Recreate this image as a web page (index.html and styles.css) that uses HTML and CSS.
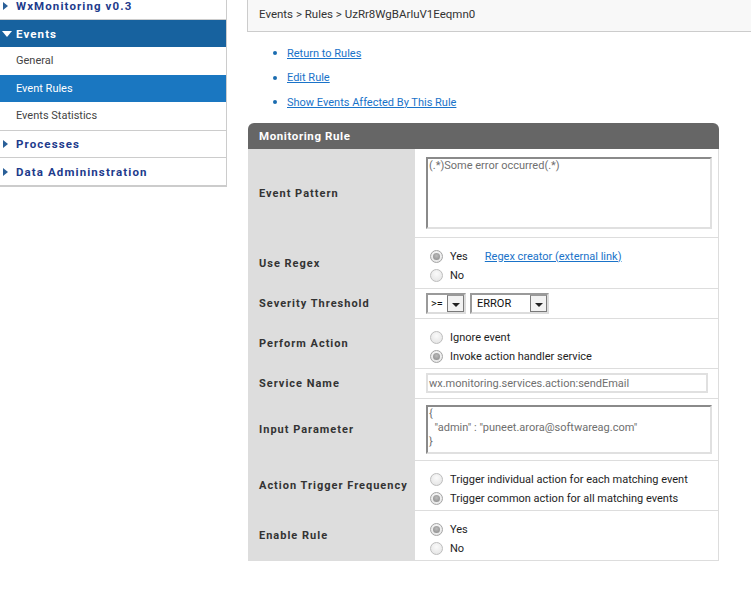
FILE: index.html
```html
<!DOCTYPE html>
<html>
<head>
<meta charset="utf-8">
<link rel="stylesheet" href="styles.css">
</head>
<body>
<div class="page">
  <nav class="sidebar">
    <div class="nav-head first"><span class="tri-right"></span>WxMonitoring v0.3</div>
    <div class="nav-head open"><span class="tri-down"></span>Events</div>
    <div class="nav-sub">
      <div class="nav-item">General</div>
      <div class="nav-item active">Event Rules</div>
      <div class="nav-item">Events Statistics</div>
    </div>
    <div class="nav-head"><span class="tri-right"></span>Processes</div>
    <div class="nav-head"><span class="tri-right"></span>Data Admininstration</div>
  </nav>
  <main class="main">
    <div class="crumbs">Events &gt; Rules &gt; UzRr8WgBArluV1Eeqmn0</div>
    <ul class="links">
      <li><a href="#">Return to Rules</a></li>
      <li><a href="#">Edit Rule</a></li>
      <li><a href="#">Show Events Affected By This Rule</a></li>
    </ul>
    <div class="panel">
      <div class="panel-head">Monitoring Rule</div>
      <div class="rows">
        <div class="row r-pattern">
          <div class="lbl">Event Pattern</div>
          <div class="val"><div class="ta ta-big">(.*)Some error occurred(.*)<span class="grip"></span></div></div>
        </div>
        <div class="row r-radio r-regex">
          <div class="lbl">Use Regex</div>
          <div class="val">
            <div class="opt"><span class="radio on"></span><span>Yes</span><a href="#" class="ext">Regex creator (external link)</a></div>
            <div class="opt"><span class="radio"></span><span>No</span></div>
          </div>
        </div>
        <div class="row r-thin">
          <div class="lbl">Severity Threshold</div>
          <div class="val sel-wrap">
            <span class="sel sel-op">&gt;=<span class="sel-btn"><span class="dn"></span></span></span>
            <span class="sel sel-lvl">ERROR<span class="sel-btn"><span class="dn"></span></span></span>
          </div>
        </div>
        <div class="row r-radio">
          <div class="lbl">Perform Action</div>
          <div class="val">
            <div class="opt"><span class="radio"></span><span>Ignore event</span></div>
            <div class="opt"><span class="radio on"></span><span>Invoke action handler service</span></div>
          </div>
        </div>
        <div class="row r-thin">
          <div class="lbl">Service Name</div>
          <div class="val"><div class="inp">wx.monitoring.services.action:sendEmail</div></div>
        </div>
        <div class="row r-input">
          <div class="lbl">Input Parameter</div>
          <div class="val"><div class="ta ta-small">{<br>&nbsp;&nbsp;"admin" : "puneet.arora@softwareag.com"<br>}<span class="grip"></span></div></div>
        </div>
        <div class="row r-radio">
          <div class="lbl">Action Trigger Frequency</div>
          <div class="val">
            <div class="opt"><span class="radio"></span><span>Trigger individual action for each matching event</span></div>
            <div class="opt"><span class="radio on"></span><span>Trigger common action for all matching events</span></div>
          </div>
        </div>
        <div class="row r-radio">
          <div class="lbl">Enable Rule</div>
          <div class="val">
            <div class="opt"><span class="radio on"></span><span>Yes</span></div>
            <div class="opt"><span class="radio"></span><span>No</span></div>
          </div>
        </div>
      </div>
    </div>
  </main>
</div>
</body>
</html>
```
FILE: styles.css
```css
* { box-sizing: border-box; }
html, body { margin: 0; padding: 0; background: #fff; }
body { font-family: Roboto, "Liberation Sans", sans-serif; font-size: 11px; color: #333; }
.page { display: flex; align-items: flex-start; }

.sidebar { width: 227px; flex: none; border-right: 1px solid #ccc; border-bottom: 1px solid #ccc; margin-top: -8px; }
.nav-head { height: 27.5px; display: flex; align-items: center; padding-left: 16px; position: relative;
  font-weight: 700; font-size: 11.5px; letter-spacing: 1.1px; color: #1d3b8c; border-bottom: 1px solid #ccc; }
.nav-head.first { height: 28px; }
.nav-head.open { background: #17629f; color: #fff; border-bottom: none; height: 27px; }
.tri-right { position: absolute; left: 3px; top: 50%; margin-top: -4px; width: 0; height: 0;
  border-top: 4px solid transparent; border-bottom: 4px solid transparent; border-left: 5px solid #2a5f98; }
.tri-down { position: absolute; left: 2px; top: 50%; margin-top: -3px; width: 0; height: 0;
  border-left: 5px solid transparent; border-right: 5px solid transparent; border-top: 6px solid #fff; }
.nav-sub { border-bottom: 1px solid #ccc; }
.nav-item { height: 27.6px; display: flex; align-items: center; padding-left: 16px; font-size: 11px; color: #444; }
.nav-item.active { background: #1a77c1; color: #fff; }

.main { margin-left: 20px; flex: 1; min-width: 0; }
.crumbs { height: 37px; margin-top: -5px; padding: 2px 0 0 11px; display: flex; align-items: center;
  background: #f8f8f8; border: 1px solid #ccc; border-top: none; border-right: none; margin-right: -10px;
  font-size: 11.5px; color: #333; }
.links { list-style: none; margin: 9px 0 0; padding: 0 0 0 26px; }
.links li { position: relative; height: 24.5px; display: flex; align-items: center; padding-left: 14px; }
.links li::before { content: ""; position: absolute; left: 0; top: 50%; margin-top: -2px; width: 4px; height: 4px; border-radius: 50%; background: #1a6cb0; }
.links a { color: #1a73c9; font-size: 11px; text-decoration: underline; }

.panel { width: 471px; margin-top: 8px; margin-left: 1px; }
.panel-head { height: 26px; background: #666; color: #fff; border-radius: 6px 6px 0 0; padding-left: 11px;
  display: flex; align-items: center; font-weight: 700; font-size: 11.5px; letter-spacing: 0.6px; }
.rows { border-right: 1px solid #ddd; }
.row { display: flex; }
.lbl { width: 167px; flex: none; background: #ddd; padding-left: 11px; display: flex; align-items: center;
  font-weight: 700; font-size: 11px; letter-spacing: 1px; color: #333; }
.val { flex: 1; border-bottom: 1px solid #ddd; padding-left: 11px; }
.r-pattern { height: 89px; }
.r-pattern .val { padding-top: 8px; }
.r-radio { height: 50px; }
.r-radio .val { display: flex; flex-direction: column; padding-top: 9px; }
.r-regex { height: 51px; }
.r-thin { height: 30px; }
.r-thin .val { display: flex; align-items: center; }
.r-input { height: 62px; }
.r-input .val { padding-top: 6px; }

.ta { position: relative; width: 286px; border: 2px solid; border-color: #8a8a8a #e0e0e0 #e0e0e0 #8a8a8a;
  color: #6f6f6f; font-size: 11px; line-height: 14px; padding: 0 1px; background: #fff; }
.ta-big { height: 72px; }
.ta-small { height: 49px; }
.grip { position: absolute; right: 2px; bottom: 2px; width: 6px; height: 6px;
  background-image: radial-gradient(circle, #999 0.6px, transparent 0.7px); background-size: 2px 2px; clip-path: polygon(100% 0, 100% 100%, 0 100%); }
.inp { width: 282px; height: 20px; border: 2px solid #e0e0e0;
  color: #6f6f6f; font-size: 11px; padding: 0 1px; display: flex; align-items: center; }

.opt { display: flex; align-items: center; height: 19px; padding-left: 4px; font-size: 11px; color: #1e1e1e; }
.radio { width: 13px; height: 13px; flex: none; margin-right: 7px; border-radius: 50%; border: 1px solid #bdbdbd;
  background: radial-gradient(circle at 50% 35%, #fafafa 0, #e6e6e6 80%); position: relative; }
.radio.on { border-color: #a5a5a5; }
.radio.on::after { content: ""; position: absolute; left: 2px; top: 2px; width: 7px; height: 7px; border-radius: 50%;
  background: radial-gradient(circle at 50% 40%, #bbb 0, #8c8c8c 90%); }
.ext { margin-left: 17px; color: #1a73c9; text-decoration: underline; }

.sel-wrap { gap: 4px; }
.sel { display: inline-flex; align-items: center; justify-content: space-between; height: 21px;
  border: 2px solid #dcdcdc; border-top-color: #9a9a9a; border-left-color: #9a9a9a; font-size: 11px; color: #111; padding-left: 4px; background: #fff; }
.sel-op { width: 40px; padding-left: 3px; }
.sel-lvl { width: 79px; padding-left: 5px; }
.sel-btn { width: 17px; height: 17px; border: 1px solid #7a7a7a; border-top-color: #999; background: #f2f2f2; position: relative; }
.dn { position: absolute; left: 4px; top: 7px; width: 0; height: 0; border-left: 4px solid transparent; border-right: 4px solid transparent; border-top: 4px solid #222; }
```
